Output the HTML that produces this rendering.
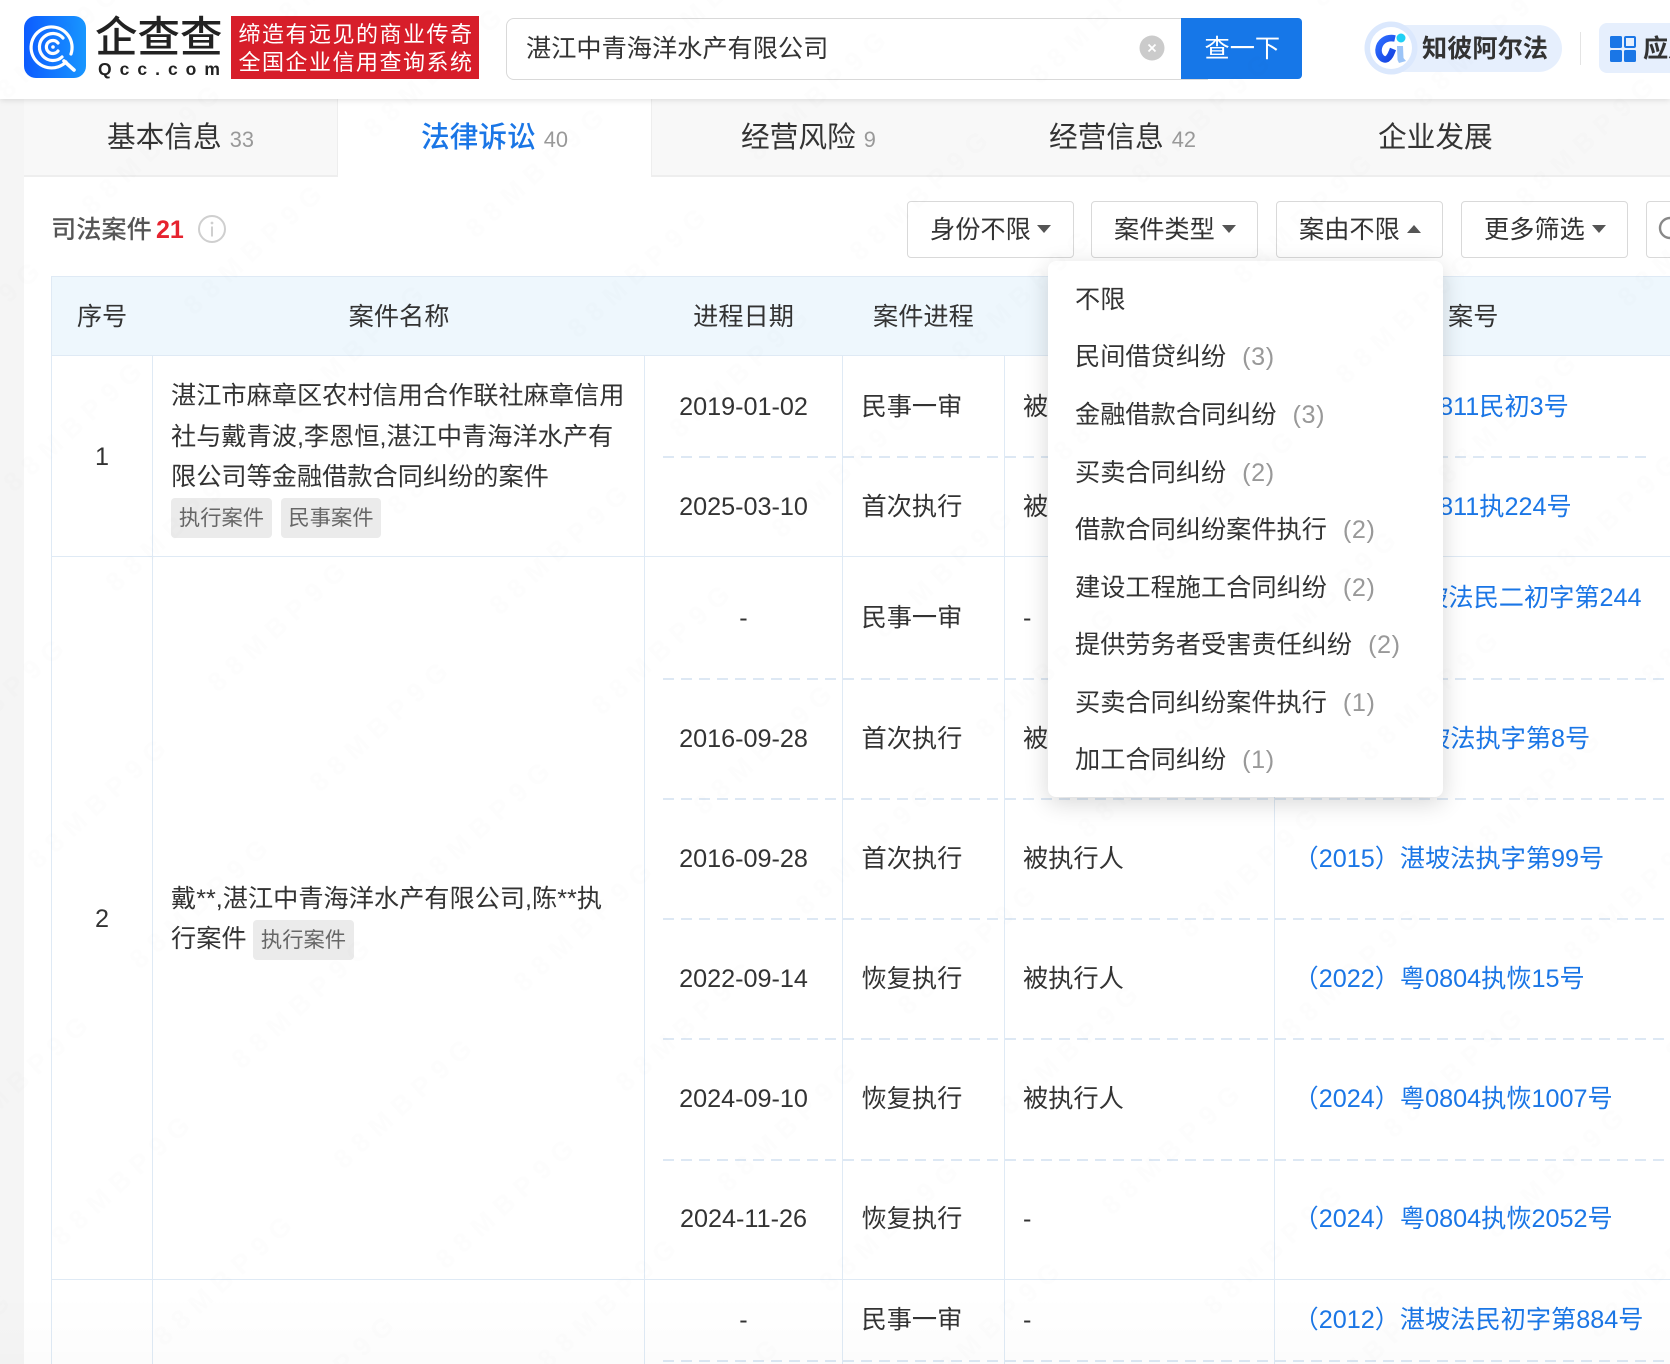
<!DOCTYPE html>
<html lang="zh-CN">
<head>
<meta charset="utf-8">
<title>企查查</title>
<style>
html,body{margin:0;padding:0;background:#fff}
#p{position:relative;width:1670px;height:1364px;overflow:hidden;background:#fff;font-family:"Liberation Sans","Noto Sans CJK SC",sans-serif;color:#333;font-size:25.2px}
#p div,#p span.t{position:absolute}
.t{white-space:nowrap;line-height:40px;height:40px;margin-top:1px}
.c{transform:translateX(-50%)}
.l{color:#1a76e6}
.v{width:1px;background:#dfeaf5}
.h{height:1px;background:#dfeaf5}
.d{height:2px;background:repeating-linear-gradient(90deg,#dde8f4 0 11px,transparent 11px 18px)}
.b{top:201px;height:55px;width:165px;border:1px solid #d9d9d9;border-radius:4px;background:#fff;box-sizing:content-box}
.tag{height:40px;line-height:40px;background:#ebebeb;border-radius:4px;color:#666;font-size:21.3px;text-align:center;white-space:nowrap}
.g{color:#999;margin-left:16px;letter-spacing:.6px}
.n{font-size:21.8px;color:#999}
.tab{font-size:28.7px;top:117px}
</style>
</head>
<body>
<div id="p">

<!-- page gutter -->
<div style="left:0;top:99px;width:24px;height:1265px;background:#f5f5f5"></div>

<!-- tabs -->
<div style="left:24px;top:99px;width:1646px;height:76px;background:#f8f8f8"></div>
<div style="left:24px;top:175px;width:1646px;height:2px;background:#eeeeee"></div>
<div style="left:337px;top:99px;width:315px;height:78px;background:#fff;border-left:1px solid #eee;border-right:1px solid #eee;box-sizing:border-box"></div>
<div class="t tab" style="left:107px">基本信息 <span class="n">33</span></div>
<div class="t tab" style="left:421px;color:#1a76e6;font-weight:500">法律诉讼 <span class="n" style="font-weight:400">40</span></div>
<div class="t tab" style="left:741px">经营风险 <span class="n">9</span></div>
<div class="t tab" style="left:1049px">经营信息 <span class="n">42</span></div>
<div class="t tab" style="left:1378px">企业发展</div>

<!-- title -->
<div class="t" style="left:51px;top:209px;color:#555;font-weight:500;font-size:25.2px">司法案件</div>
<div class="t" style="left:156px;top:209px;color:#e6232f;font-weight:700;font-size:25px">21</div>
<svg style="position:absolute;left:197px;top:214px" width="30" height="30" viewBox="0 0 30 30"><circle cx="15" cy="15" r="13" fill="none" stroke="#cfcfcf" stroke-width="2"/><circle cx="15" cy="9" r="1.4" fill="#cfcfcf"/><rect x="14" y="12.5" width="2" height="10" fill="#cfcfcf"/></svg>

<!-- filters -->
<div class="b" style="left:907px"></div>
<div class="b" style="left:1091px"></div>
<div class="b" style="left:1276px"></div>
<div class="b" style="left:1461px"></div>
<div class="b" style="left:1646px;width:60px"></div>
<div class="t" style="left:930px;top:209px">身份不限</div>
<div class="t" style="left:1114px;top:209px">案件类型</div>
<div class="t" style="left:1299px;top:209px">案由不限</div>
<div class="t" style="left:1484px;top:209px">更多筛选</div>
<svg style="position:absolute;left:0;top:0" width="1670" height="280">
<path d="M1037 225h14l-7 8z" fill="#555"/>
<path d="M1222 225h14l-7 8z" fill="#555"/>
<path d="M1407 233h14l-7-8z" fill="#555"/>
<path d="M1592 225h14l-7 8z" fill="#555"/>
<circle cx="1670" cy="228" r="10" fill="none" stroke="#888" stroke-width="2.4"/>
</svg>

<!-- table header -->
<div style="left:51px;top:276px;width:1619px;height:79px;background:#eef7fd"></div>
<div class="h" style="left:51px;top:276px;width:1619px"></div>
<div class="h" style="left:51px;top:355px;width:1619px"></div>
<div class="t c" style="left:102px;top:296px">序号</div>
<div class="t c" style="left:399px;top:296px">案件名称</div>
<div class="t c" style="left:743.5px;top:296px">进程日期</div>
<div class="t" style="left:873px;top:296px">案件进程</div>
<div class="t" style="left:1448px;top:296px">案号</div>

<!-- grid -->
<div class="v" style="left:51px;top:276px;height:1088px"></div>
<div class="v" style="left:152px;top:355px;height:1009px"></div>
<div class="v" style="left:644px;top:355px;height:1009px"></div>
<div class="v" style="left:842px;top:355px;height:1009px"></div>
<div class="v" style="left:1004px;top:355px;height:1009px"></div>
<div class="v" style="left:1274px;top:355px;height:1009px"></div>
<div class="h" style="left:51px;top:556px;width:1619px"></div>
<div class="h" style="left:51px;top:1279px;width:1619px"></div>
<div class="d" style="left:663px;top:456px;width:984px"></div>
<div class="d" style="left:663px;top:678px;width:1002px"></div>
<div class="d" style="left:663px;top:798px;width:1002px"></div>
<div class="d" style="left:663px;top:918px;width:1002px"></div>
<div class="d" style="left:663px;top:1038px;width:1002px"></div>
<div class="d" style="left:663px;top:1159px;width:1002px"></div>
<div class="d" style="left:663px;top:1360px;width:1002px"></div>

<!-- name cells -->
<div class="t c" style="left:102px;top:436px">1</div>
<div class="t" style="left:171px;top:375px">湛江市麻章区农村信用合作联社麻章信用</div>
<div class="t" style="left:171px;top:416px">社与戴青波,李恩恒,湛江中青海洋水产有</div>
<div class="t" style="left:171px;top:456px">限公司等金融借款合同纠纷的案件</div>
<div class="tag" style="left:171px;top:498px;width:101px">执行案件</div>
<div class="tag" style="left:281px;top:498px;width:100px">民事案件</div>
<div class="t c" style="left:102px;top:898px">2</div>
<div class="t" style="left:171px;top:878px">戴**,湛江中青海洋水产有限公司,陈**执</div>
<div class="t" style="left:171px;top:918px">行案件</div>
<div class="tag" style="left:253px;top:920px;width:101px">执行案件</div>

<!-- rows: date -->
<div class="t c" style="left:743.5px;top:386px">2019-01-02</div>
<div class="t c" style="left:743.5px;top:486px">2025-03-10</div>
<div class="t c" style="left:743.5px;top:597px">-</div>
<div class="t c" style="left:743.5px;top:718px">2016-09-28</div>
<div class="t c" style="left:743.5px;top:838px">2016-09-28</div>
<div class="t c" style="left:743.5px;top:958px">2022-09-14</div>
<div class="t c" style="left:743.5px;top:1078px">2024-09-10</div>
<div class="t c" style="left:743.5px;top:1198px">2024-11-26</div>
<div class="t c" style="left:743.5px;top:1299px">-</div>

<!-- rows: progress -->
<div class="t" style="left:861.500px;top:386px">民事一审</div>
<div class="t" style="left:861.500px;top:486px">首次执行</div>
<div class="t" style="left:861.500px;top:597px">民事一审</div>
<div class="t" style="left:861.500px;top:718px">首次执行</div>
<div class="t" style="left:861.500px;top:838px">首次执行</div>
<div class="t" style="left:861.500px;top:958px">恢复执行</div>
<div class="t" style="left:861.500px;top:1078px">恢复执行</div>
<div class="t" style="left:861.500px;top:1198px">恢复执行</div>
<div class="t" style="left:861.500px;top:1299px">民事一审</div>

<!-- rows: role -->
<div class="t" style="left:1023px;top:386px">被告</div>
<div class="t" style="left:1023px;top:486px">被执行人</div>
<div class="t" style="left:1023px;top:597px">-</div>
<div class="t" style="left:1023px;top:718px">被执行人</div>
<div class="t" style="left:1023px;top:838px">被执行人</div>
<div class="t" style="left:1023px;top:958px">被执行人</div>
<div class="t" style="left:1023px;top:1078px">被执行人</div>
<div class="t" style="left:1023px;top:1198px">-</div>
<div class="t" style="left:1023px;top:1299px">-</div>

<!-- rows: case no -->
<div class="t l" style="left:1293.500px;top:386px">（2019）粤0811民初3号</div>
<div class="t l" style="left:1293.500px;top:486px">（2024）粤0811执224号</div>
<div class="t l" style="left:1293.500px;top:577px">（2011）湛坡法民二初字第244</div>
<div class="t l" style="left:1293.500px;top:617px">号</div>
<div class="t l" style="left:1293.500px;top:718px">（2015）湛坡法执字第8号</div>
<div class="t l" style="left:1293.500px;top:838px">（2015）湛坡法执字第99号</div>
<div class="t l" style="left:1293.500px;top:958px">（2022）粤0804执恢15号</div>
<div class="t l" style="left:1293.500px;top:1078px">（2024）粤0804执恢1007号</div>
<div class="t l" style="left:1293.500px;top:1198px">（2024）粤0804执恢2052号</div>
<div class="t l" style="left:1293.500px;top:1299px">（2012）湛坡法民初字第884号</div>

<!-- dropdown -->
<div style="left:1048px;top:261px;width:395px;height:536px;background:#fff;border-radius:8px;box-shadow:0 6px 24px rgba(0,0,0,.16)"></div>
<div class="t" style="left:1075px;top:279px">不限</div>
<div class="t" style="left:1075px;top:335.500px">民间借贷纠纷<span class="g">(3)</span></div>
<div class="t" style="left:1075px;top:393.500px">金融借款合同纠纷<span class="g">(3)</span></div>
<div class="t" style="left:1075px;top:451.500px">买卖合同纠纷<span class="g">(2)</span></div>
<div class="t" style="left:1075px;top:508.500px">借款合同纠纷案件执行<span class="g">(2)</span></div>
<div class="t" style="left:1075px;top:566.500px">建设工程施工合同纠纷<span class="g">(2)</span></div>
<div class="t" style="left:1075px;top:623.500px">提供劳务者受害责任纠纷<span class="g">(2)</span></div>
<div class="t" style="left:1075px;top:681.500px">买卖合同纠纷案件执行<span class="g">(1)</span></div>
<div class="t" style="left:1075px;top:738.500px">加工合同纠纷<span class="g">(1)</span></div>

<!-- header bar -->
<div style="left:0;top:0;width:1670px;height:99px;background:#fff;box-shadow:0 1px 6px rgba(0,0,0,.13)"></div>

<!-- logo -->
<svg style="position:absolute;left:24px;top:16px" width="62" height="62" viewBox="0 0 62 62">
<defs><linearGradient id="lg" x1="0" y1="0" x2="1" y2="0"><stop offset="0" stop-color="#0d5cff"/><stop offset="1" stop-color="#1896ff"/></linearGradient></defs>
<rect width="62" height="62" rx="12" fill="url(#lg)"/>
<g fill="none" stroke="#fff" stroke-linecap="round">
<path d="M42 46A20.500 20.500 0 1 1 47 38" stroke-width="3.200"/>
<path d="M40 45L50 54" stroke-width="3.600"/>
<path d="M38 41A13.500 13.500 0 1 1 39 22" stroke-width="3.200"/>
<path d="M34 27A6.500 6.500 0 1 0 34 35" stroke-width="3.200"/>
</g>
<circle cx="29" cy="31" r="1.800" fill="#fff"/>
</svg>
<div class="t" style="left:95px;top:15px;height:46px;line-height:46px;font-size:42.500px;font-weight:500;color:#222;letter-spacing:0">企查查</div>
<div class="t" style="left:98px;top:57px;height:22px;line-height:22px;font-size:17.500px;font-weight:700;color:#222;letter-spacing:8px">Qcc.com</div>

<!-- red slogan -->
<div style="left:231px;top:16px;width:248px;height:63px;background:#d71e2a"></div>
<div class="t" style="left:238.500px;top:14px;color:#fff;font-size:22px;letter-spacing:1.5px">缔造有远见的商业传奇</div>
<div class="t" style="left:238.500px;top:41.500px;color:#fff;font-size:22px;letter-spacing:1.5px">全国企业信用查询系统</div>

<!-- search -->
<div style="left:506px;top:18px;width:700px;height:60px;border:1px solid #d9d9d9;border-radius:8px 0 0 8px;background:#fff"></div>
<div style="left:1181px;top:18px;width:121px;height:61px;background:#1677e8;border-radius:0 4px 4px 0"></div>
<div class="t" style="left:526px;top:28px;color:#333">湛江中青海洋水产有限公司</div>
<div class="t" style="left:1204.500px;top:28px;color:#fff">查一下</div>
<svg style="position:absolute;left:1139px;top:35px" width="26" height="26" viewBox="0 0 26 26"><circle cx="13" cy="13" r="12.500" fill="#cbcbcb"/><path d="M9.500 9.500l7 7M16.500 9.500l-7 7" stroke="#fff" stroke-width="1.800"/></svg>

<!-- alpha -->
<div style="left:1385px;top:25px;width:177px;height:47px;border-radius:0 24px 24px 0;background:#e6effd"></div>
<svg style="position:absolute;left:1364px;top:21px" width="54" height="54" viewBox="0 0 54 54">
<defs><linearGradient id="ag" x1="0" y1="0" x2="1" y2="1"><stop offset="0" stop-color="#2f6dff"/><stop offset="1" stop-color="#1240e0"/></linearGradient></defs>
<circle cx="27" cy="27" r="26.500" fill="#dbe8fd"/>
<circle cx="27" cy="27" r="21" fill="#fff"/>
<path d="M31 17.500C22 15.500 15 21 14.500 29C14.500 35 19 40 23 38C26 36 27 33 29 28" fill="none" stroke="url(#ag)" stroke-width="6.500"/>
<path d="M33 25h6l.5 12 2.500 3-7 2-1.500-3z" fill="#9cc4f7"/>
<circle cx="37" cy="17" r="4.500" fill="#1fd0f5"/>
</svg>
<div class="t" style="left:1422px;top:28px;color:#333;font-weight:700">知彼阿尔法</div>
<div style="left:1580px;top:32px;width:1px;height:33px;background:#e4e4e4"></div>
<div style="left:1599px;top:23px;width:100px;height:50px;border-radius:8px;background:#e6effd"></div>
<svg style="position:absolute;left:1610px;top:36px" width="26" height="26" viewBox="0 0 26 26">
<rect x="0" y="0" width="12" height="12" rx="1.500" fill="#1a76e6"/>
<rect x="15" y="1" width="10" height="10" rx="1" fill="none" stroke="#1a76e6" stroke-width="2"/>
<rect x="0" y="14" width="12" height="12" rx="1.500" fill="#1a76e6"/>
<rect x="14" y="14" width="12" height="12" rx="1.500" fill="#1a76e6"/>
</svg>
<div class="t" style="left:1643px;top:28px;color:#333;font-weight:700">应用</div>

<!-- watermark + bottom fade -->
<div style="left:0;top:1290px;width:1670px;height:74px;background:linear-gradient(rgba(0,0,0,0),rgba(0,0,0,.012));pointer-events:none"></div>
<svg style="position:absolute;left:0;top:0;pointer-events:none" width="1670" height="1364">
<defs><pattern id="wm" patternUnits="userSpaceOnUse" width="1" height="1" patternTransform="matrix(282 -77 102 100 -42 1163)">
<g transform="matrix(.002774 .002136 -.002829 .007822 .05 .88)"><text transform="rotate(-42.600)" font-family="Liberation Sans" font-weight="700" font-size="28" letter-spacing="10" fill="#000" fill-opacity=".007">88MBP9G</text></g>
</pattern></defs>
<rect width="1670" height="1364" fill="url(#wm)"/>
</svg>

</div>
</body>
</html>
